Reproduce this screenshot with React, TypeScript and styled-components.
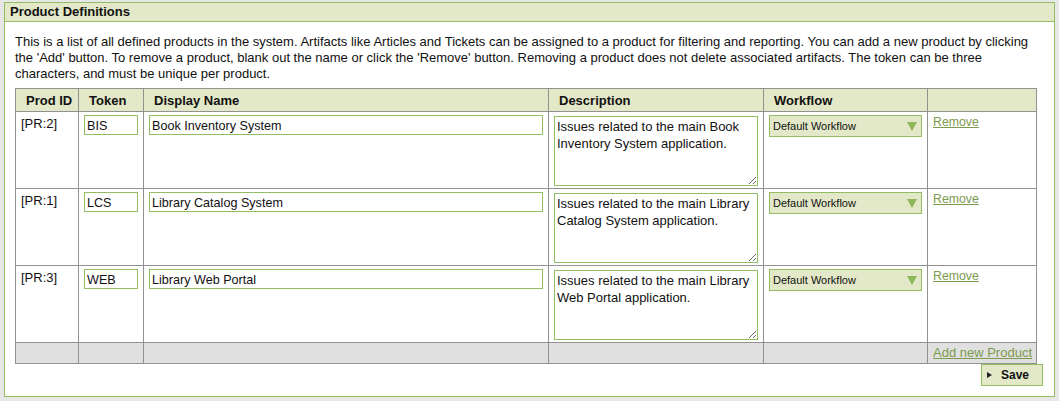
import React from "react";
import styled, { createGlobalStyle } from "styled-components";

const Global = createGlobalStyle`
  html, body { margin: 0; padding: 0; background: #e7e7e7; }
  body { font-family: "Liberation Sans", Arial, sans-serif; color: #111; }
`;

const Page = styled.div`
  padding: 2px 4px 4px 4px;
`;

const Panel = styled.section`
  border: 1px solid #93bd62;
  background: #fff;
`;

const PanelHeader = styled.h2`
  margin: 0;
  height: 18px;
  line-height: 18px;
  padding: 0 5px;
  background: #e3e9c8;
  border-bottom: 1px solid #93bd62;
  font-size: 13px;
  font-weight: bold;
  color: #111;
`;

const Body = styled.div`
  padding: 12px 11px 10px 10px;
  display: flex;
  flex-direction: column;
`;

const Intro = styled.p`
  margin: 0 0 6px 0;
  font-size: 13px;
  line-height: 16px;
  color: #111;
`;

const Table = styled.table`
  border-collapse: collapse;
  table-layout: fixed;
  width: 1021px;
  font-size: 13px;
`;

const Col = styled.col<{ $w: number }>`
  width: ${(p) => p.$w}px;
`;

const Th = styled.th`
  background: #e3e9c8;
  border: 1px solid #929292;
  height: 23px;
  padding: 0 10px;
  text-align: left;
  font-size: 13px;
  font-weight: bold;
  white-space: nowrap;
  box-sizing: border-box;
`;

const Tr = styled.tr`
  height: 77px;
`;

const Td = styled.td`
  border: 1px solid #929292;
  vertical-align: top;
  padding: 2px 5px;
  font-size: 13px;
`;

const IdText = styled.div`
  padding-top: 2px;
  font-size: 13px;
`;

const TextInput = styled.input<{ $w?: number }>`
  box-sizing: border-box;
  width: ${(p) => (p.$w ? `${p.$w}px` : "100%")};
  height: 20px;
  border: 1px solid #93bd62;
  padding: 1px 2px 0;
  font-family: "Liberation Sans", Arial, sans-serif;
  font-size: 12.6px;
  color: #111;
  margin-top: 1px;
  outline: none;
`;

const TextArea = styled.textarea`
  box-sizing: border-box;
  width: 100%;
  height: 70px;
  border: 1px solid #93bd62;
  padding: 1px 2px;
  font-family: "Liberation Sans", Arial, sans-serif;
  font-size: 13px;
  line-height: 17px;
  color: #111;
  resize: both;
  margin: 2px 0 0 0;
  display: block;
  outline: none;
`;

const SelectBox = styled.div`
  box-sizing: border-box;
  height: 22px;
  border: 1px solid #93bd62;
  background: #e3e9c8;
  display: flex;
  align-items: center;
  justify-content: space-between;
  padding: 0 3px 0 3px;
  margin-top: 1px;
  font-family: "Liberation Sans", Arial, sans-serif;
  font-size: 11px;
  color: #111;
`;

const Arrow = styled.span`
  width: 0;
  height: 0;
  border-left: 5px solid transparent;
  border-right: 5px solid transparent;
  border-top: 9px solid #8db85a;
  margin-right: 1px;
`;

const Link = styled.a<{ $size?: number }>`
  color: #7d9a4e;
  text-decoration: underline;
  font-size: ${(p) => p.$size ?? 13}px;
  white-space: nowrap;
  cursor: pointer;
`;

const FootRow = styled.tr`
  height: 21px;
  background: #e0e0e0;
`;

const FootTd = styled.td<{ $right?: boolean }>`
  border: 1px solid #929292;
  padding: 0 4px;
  text-align: ${(p) => (p.$right ? "right" : "left")};
  vertical-align: middle;
  white-space: nowrap;
  line-height: 16px;
`;

const Actions = styled.div`
  display: flex;
  justify-content: flex-end;
`;

const SaveButton = styled.button`
  box-sizing: border-box;
  width: 62px;
  height: 22px;
  margin-top: 0;
  background: #e3e9c8;
  border: 1px solid #93bd62;
  font-family: "Liberation Sans", Arial, sans-serif;
  font-size: 12px;
  font-weight: bold;
  color: #111;
  display: flex;
  align-items: center;
  gap: 9px;
  padding: 0 5px;
  &::before {
    content: "";
    width: 0;
    height: 0;
    border-top: 3px solid transparent;
    border-bottom: 3px solid transparent;
    border-left: 5px solid #222;
  }
`;

const products = [
  { id: "[PR:2]", token: "BIS", name: "Book Inventory System", desc: "Issues related to the main Book Inventory System application." },
  { id: "[PR:1]", token: "LCS", name: "Library Catalog System", desc: "Issues related to the main Library Catalog System application." },
  { id: "[PR:3]", token: "WEB", name: "Library Web Portal", desc: "Issues related to the main Library Web Portal application." },
];

export default function App() {
  return (
    <>
      <Global />
      <Page>
        <Panel>
          <PanelHeader>Product Definitions</PanelHeader>
          <Body>
            <Intro>
              This is a list of all defined products in the system. Artifacts like Articles and Tickets can be assigned to a
              product for filtering and reporting. You can add a new product by clicking the 'Add' button. To remove a product,
              blank out the name or click the 'Remove' button. Removing a product does not delete associated artifacts. The token
              can be three characters, and must be unique per product.
            </Intro>
            <Table>
              <colgroup>
                <Col $w={63} />
                <Col $w={65} />
                <Col $w={405} />
                <Col $w={215} />
                <Col $w={164} />
                <Col $w={109} />
              </colgroup>
              <thead>
                <tr>
                  <Th>Prod ID</Th>
                  <Th>Token</Th>
                  <Th>Display Name</Th>
                  <Th>Description</Th>
                  <Th>Workflow</Th>
                  <Th></Th>
                </tr>
              </thead>
              <tbody>
                {products.map((p) => (
                  <Tr key={p.id}>
                    <Td><IdText>{p.id}</IdText></Td>
                    <Td><TextInput $w={54} defaultValue={p.token} /></Td>
                    <Td><TextInput defaultValue={p.name} /></Td>
                    <Td><TextArea defaultValue={p.desc} /></Td>
                    <Td>
                      <SelectBox>
                        <span>Default Workflow</span>
                        <Arrow />
                      </SelectBox>
                    </Td>
                    <Td><Link $size={12.3}>Remove</Link></Td>
                  </Tr>
                ))}
                <FootRow>
                  <FootTd />
                  <FootTd />
                  <FootTd />
                  <FootTd />
                  <FootTd />
                  <FootTd $right><Link>Add new Product</Link></FootTd>
                </FootRow>
              </tbody>
            </Table>
            <Actions>
              <SaveButton type="button">Save</SaveButton>
            </Actions>
          </Body>
        </Panel>
      </Page>
    </>
  );
}
